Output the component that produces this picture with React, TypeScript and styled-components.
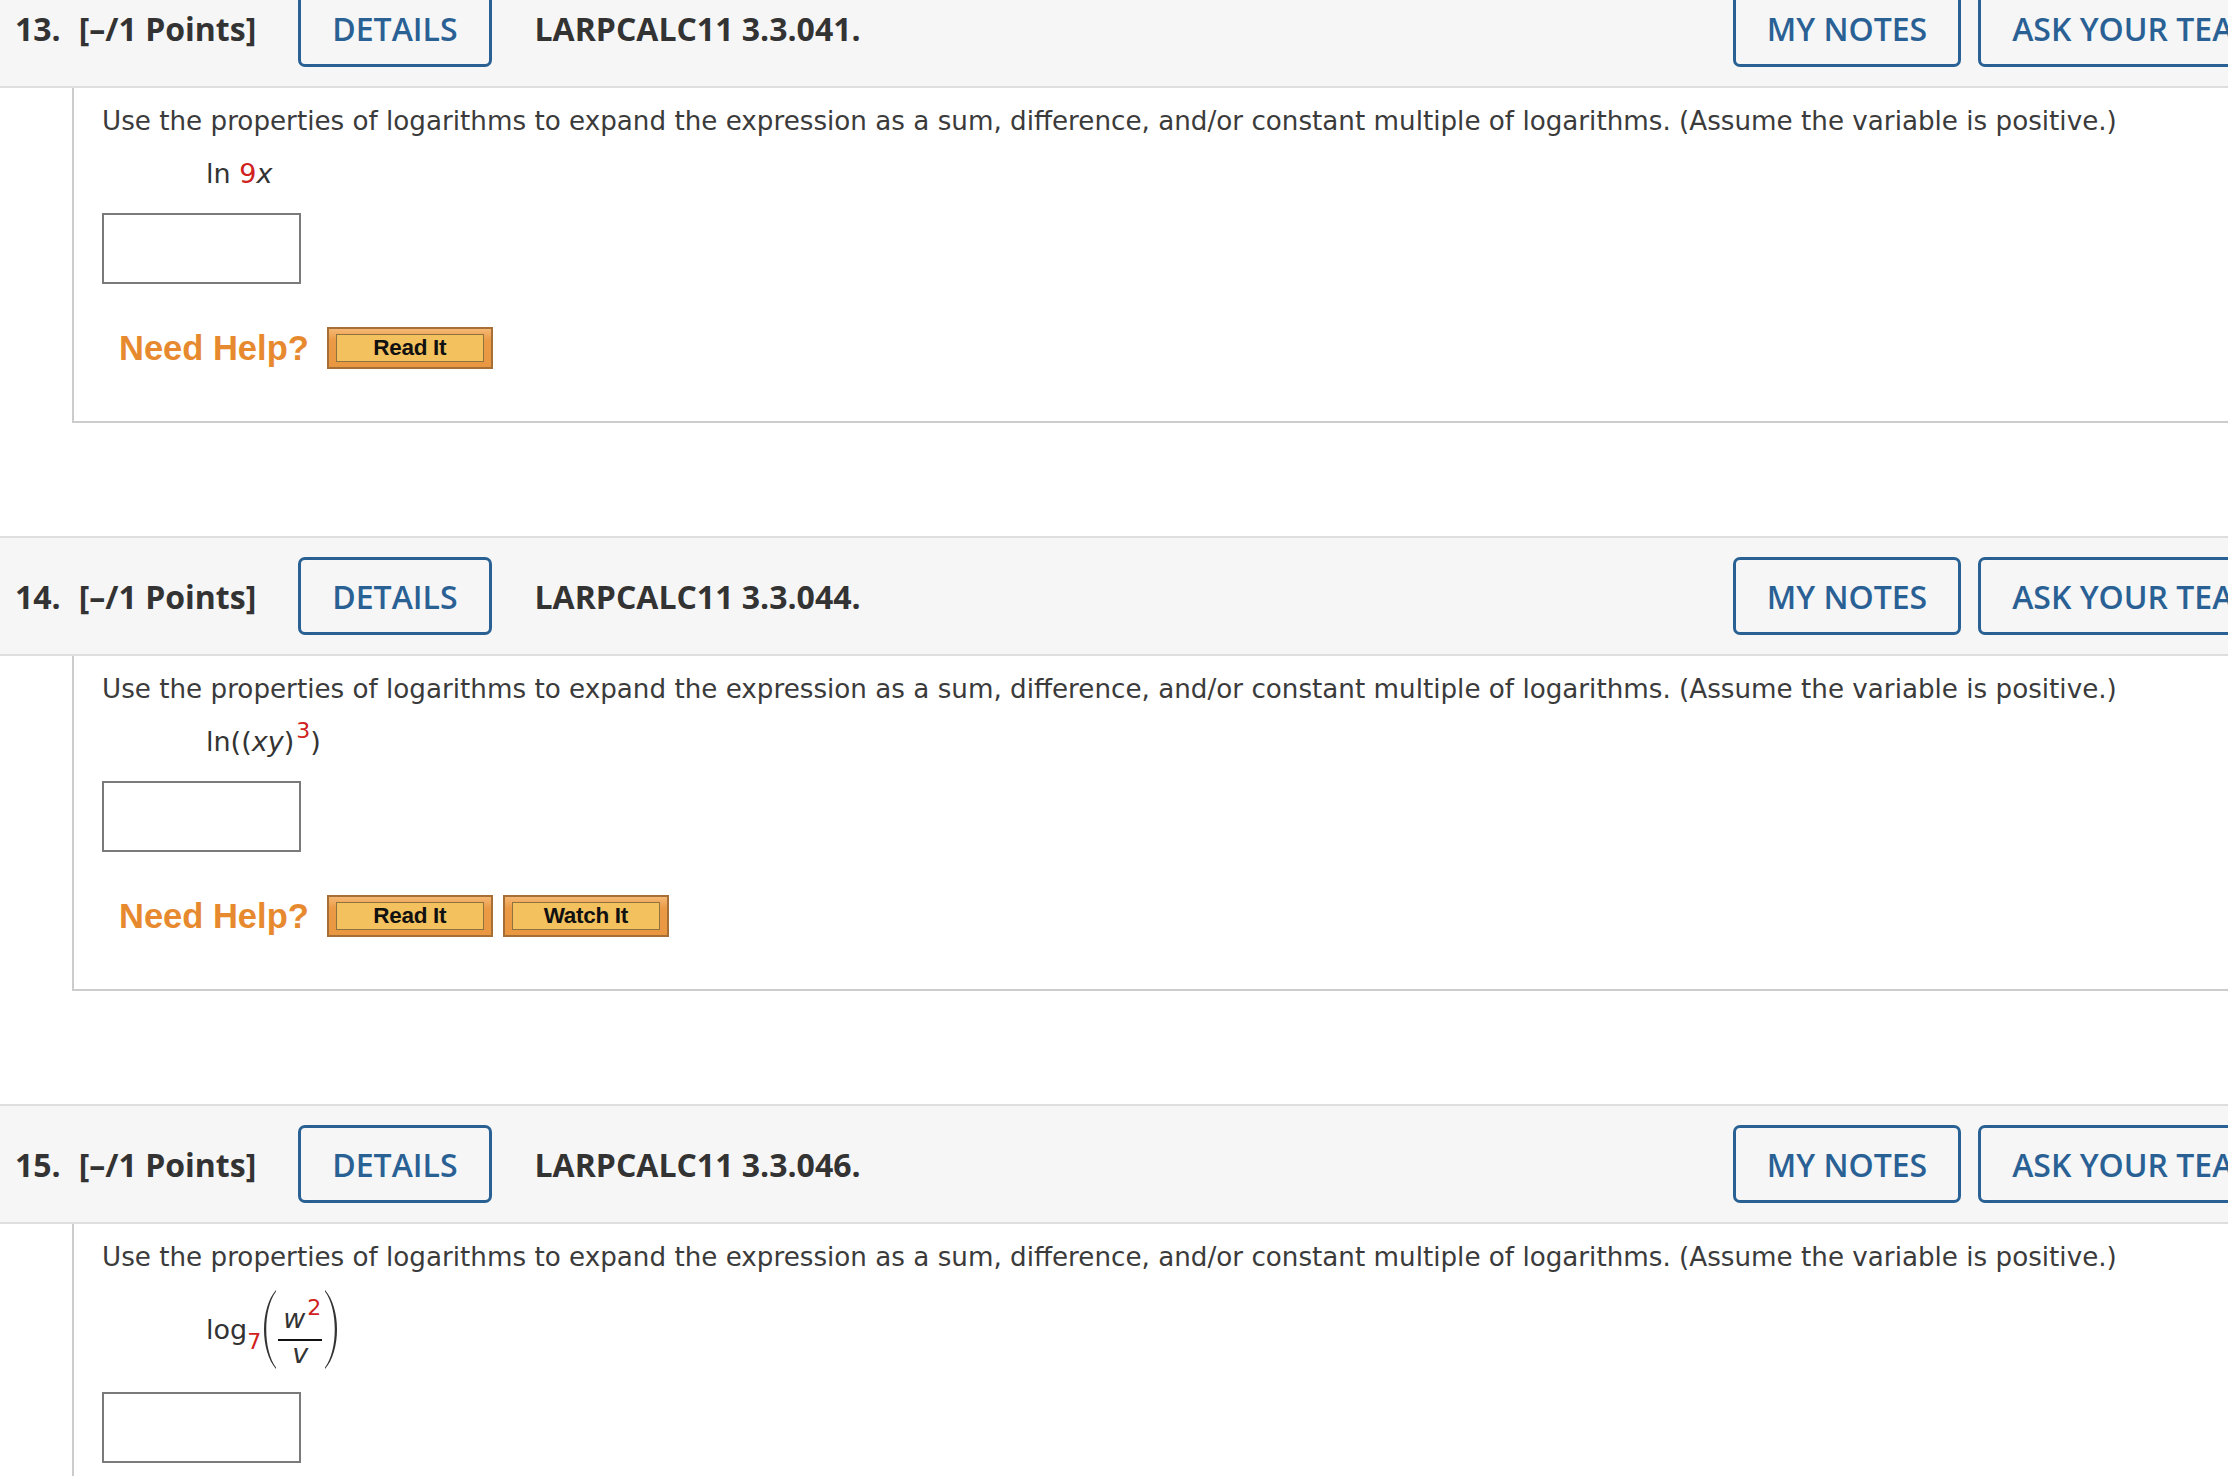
import React from "react";
import styled, { createGlobalStyle } from "styled-components";

const GlobalStyle = createGlobalStyle`
  html, body {
    margin: 0;
    padding: 0;
    overflow: hidden;
    background: #ffffff;
  }
  body {
    font-family: "DejaVu Sans", Verdana, sans-serif;
    color: #3d3d3d;
  }
`;

const Page = styled.div`
  width: 2366px;
  margin-top: -32px;
`;

const Question = styled.section`
  margin-bottom: 113px;
`;

const Header = styled.div`
  display: flex;
  align-items: center;
  height: 78px;
  padding: 19px 0 19px 15px;
  background: #f6f6f6;
  border-top: 2px solid #dedede;
  border-bottom: 2px solid #dedede;
  font-family: "Open Sans", "Liberation Sans", sans-serif;
  font-size: 32px;
  font-weight: 700;
  color: #333333;
`;

const Number = styled.span`
  margin-right: 18px;
`;

const Points = styled.span`
  margin-right: 42px;
`;

const Code = styled.span`
  margin-left: 43px;
`;

const RightGroup = styled.div`
  margin-left: auto;
  display: flex;
  gap: 17px;
  padding-right: 16px;
`;

const OutlineButton = styled.button`
  height: 78px;
  box-sizing: border-box;
  padding: 0 31px;
  background: transparent;
  border: 3px solid #2a6195;
  border-radius: 7px;
  color: #2a6195;
  font-family: "Open Sans", "Liberation Sans", sans-serif;
  font-size: 32px;
  font-weight: 600;
  white-space: nowrap;
  cursor: pointer;
`;

const Body = styled.div`
  margin-left: 72px;
  padding: 18px 0 52px 28px;
  border-left: 2px solid #cccccc;
  border-bottom: 2px solid #cccccc;
`;

const Prompt = styled.p`
  margin: 0;
  font-size: 26.2px;
  line-height: 30px;
  color: #3b3b3b;
  white-space: nowrap;
`;

const Formula = styled.div<{ $tall?: boolean }>`
  margin: ${(p) => (p.$tall ? "17px 0 -2px" : "23px 0 0")};
  padding-left: 104px;
  display: flex;
  align-items: ${(p) => (p.$tall ? "flex-end" : "center")};
  min-height: 30px;
  font-size: 27px;
  line-height: 30px;
  color: #333333;
`;

const Red = styled.span`
  color: #d0211c;
`;

const Var = styled.i`
  font-style: italic;
`;

const Sup = styled.sup`
  color: #d0211c;
  font-size: 22px;
  line-height: 0;
  vertical-align: 13px;
  padding-left: 2px;
`;

const LogName = styled.span`
  margin-bottom: 25px;
`;

const Sub = styled.sub`
  color: #d0211c;
  font-size: 22px;
  line-height: 0;
  vertical-align: -10px;
`;

const Fraction = styled.span`
  display: inline-flex;
  flex-direction: column;
  align-items: center;
  margin: 0 2px 3px 1px;
`;

const Numerator = styled.span`
  line-height: 30px;
  margin-bottom: 5px;
  padding: 0 1px 0 5px;
`;

const FracLine = styled.span`
  align-self: stretch;
  height: 2px;
  background: #111111;
`;

const Denominator = styled.span`
  line-height: 26px;
`;

const AnswerBox = styled.input`
  display: block;
  margin-top: 24px;
  width: 199px;
  height: 71px;
  box-sizing: border-box;
  border: 2px solid #7a7a7a;
  border-radius: 0;
  background: #ffffff;
  outline: none;
`;

const HelpRow = styled.div`
  margin-top: 43px;
  padding-left: 17px;
  display: flex;
  align-items: center;
  gap: 10px;
`;

const NeedHelp = styled.span`
  font-family: "Liberation Sans", Arial, sans-serif;
  font-weight: 700;
  font-size: 34.5px;
  color: #e78a2f;
  margin-right: 8px;
`;

const HelpButton = styled.button`
  width: 166px;
  height: 42px;
  box-sizing: border-box;
  padding: 5px 7px;
  border: 2px solid #a56f35;
  background: linear-gradient(#f5b874 0%, #eb9a45 30%, #e99741 100%);
  cursor: pointer;
`;

const HelpButtonFace = styled.span`
  display: flex;
  align-items: center;
  justify-content: center;
  height: 100%;
  box-sizing: border-box;
  border: 1px solid #8f733f;
  background: #f3c25e;
  font-family: "Liberation Sans", Arial, sans-serif;
  font-weight: 700;
  font-size: 22.5px;
  color: #111111;
  letter-spacing: -0.3px;
`;

const PROMPT =
  "Use the properties of logarithms to expand the expression as a sum, difference, and/or constant multiple of logarithms. (Assume the variable is positive.)";

function Paren({ right }: { right?: boolean }) {
  return (
    <svg
      width="16"
      height="81"
      viewBox="0 0 16 81"
      style={{ display: "block", transform: right ? "scaleX(-1)" : undefined }}
    >
      <path
        d="M15 1 C-1 19 -1 62 15 80 L15 78.5 C2 61 2 20 15 2.5 Z"
        fill="#333"
      />
    </svg>
  );
}

type Item = {
  num: number;
  code: string;
  tall?: boolean;
  formula: React.ReactNode;
  help: string[];
};

const items: Item[] = [
  {
    num: 13,
    code: "LARPCALC11 3.3.041.",
    formula: (
      <span>
        ln <Red>9</Red>
        <Var>x</Var>
      </span>
    ),
    help: ["Read It"],
  },
  {
    num: 14,
    code: "LARPCALC11 3.3.044.",
    formula: (
      <span>
        ln((<Var>xy</Var>)<Sup>3</Sup>)
      </span>
    ),
    help: ["Read It", "Watch It"],
  },
  {
    num: 15,
    code: "LARPCALC11 3.3.046.",
    tall: true,
    formula: (
      <>
        <LogName>
          log<Sub>7</Sub>
        </LogName>
        <Paren />
        <Fraction>
          <Numerator>
            <Var>w</Var>
            <Sup>2</Sup>
          </Numerator>
          <FracLine />
          <Denominator>
            <Var>v</Var>
          </Denominator>
        </Fraction>
        <Paren right />
      </>
    ),
    help: ["Read It"],
  },
];

export default function App() {
  return (
    <>
      <GlobalStyle />
      <Page>
        {items.map((item) => (
          <Question key={item.num}>
            <Header>
              <Number>{item.num}.</Number>
              <Points>[–/1 Points]</Points>
              <OutlineButton>DETAILS</OutlineButton>
              <Code>{item.code}</Code>
              <RightGroup>
                <OutlineButton>MY NOTES</OutlineButton>
                <OutlineButton>ASK YOUR TEACHER</OutlineButton>
              </RightGroup>
            </Header>
            <Body>
              <Prompt>{PROMPT}</Prompt>
              <Formula $tall={item.tall}>{item.formula}</Formula>
              <AnswerBox type="text" />
              <HelpRow>
                <NeedHelp>Need Help?</NeedHelp>
                {item.help.map((h) => (
                  <HelpButton key={h}>
                    <HelpButtonFace>{h}</HelpButtonFace>
                  </HelpButton>
                ))}
              </HelpRow>
            </Body>
          </Question>
        ))}
      </Page>
    </>
  );
}
